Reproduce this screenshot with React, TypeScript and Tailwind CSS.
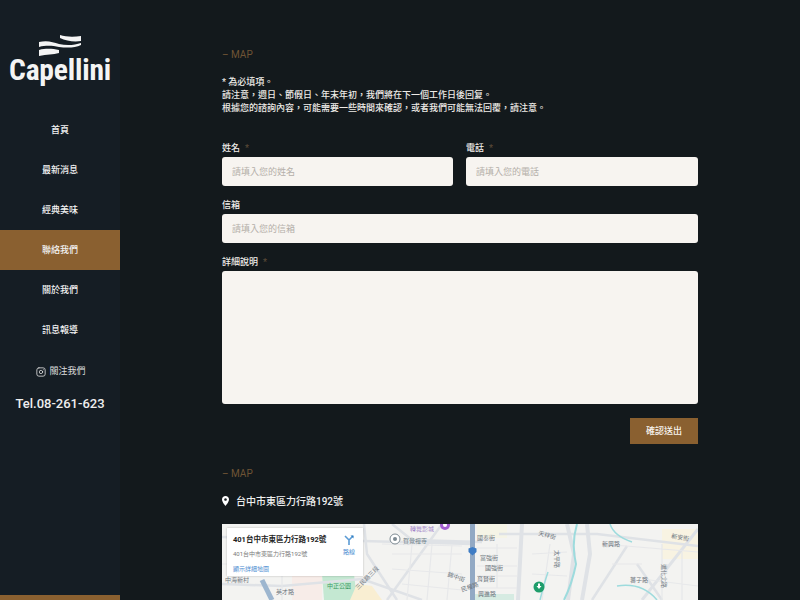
import { Instagram } from "lucide-react";

const font = { fontFamily: '"Roboto", "Noto Sans CJK TC", sans-serif' };

const nav = ["首頁", "最新消息", "經典美味", "聯絡我們", "關於我們", "訊息報導"];

function Logo() {
  return (
    <div className="flex flex-col items-center">
      <svg width="42" height="21" viewBox="0 0 42 21" className="block">
        <path d="M21 0 C27 2 35 2 42 1 L42 6 C35 7 27 6 21 3 Z" fill="#f4f4f4" />
        <path d="M0 7 C8 5 14 7 20 9 C28 11 36 10 42 8 L42 10 C36 13 28 13 20 12 C14 11 8 10 0 12 Z" fill="#f4f4f4" />
        <path d="M0 15 C8 13 14 14 20 15 L20 18 C14 20 8 19 0 21 Z" fill="#f4f4f4" />
      </svg>
      <div className="text-[29.5px] leading-[28px] font-bold text-[#f4f4f4] tracking-[-0.2px] [font-stretch:condensed]">Capellini</div>
    </div>
  );
}

function Field({ label, required, placeholder, className }: { label: string; required?: boolean; placeholder?: string; className?: string }) {
  return (
    <label className={`flex flex-col ${className ?? ""}`}>
      <span className="h-[13px] leading-[13px] text-[9px] font-medium text-[#f1eeea]">
        {label}
        {required && <span className="ml-[5px] text-[#5a4a38]">*</span>}
      </span>
      <input
        readOnly
        placeholder={placeholder}
        className="mt-[2px] h-[29px] w-full rounded-[3px] bg-[#f7f4f0] px-[10px] text-[9px] outline-none placeholder:text-[#b4afa9]"
      />
    </label>
  );
}

function MapTag() {
  return <div className="h-[14px] text-[10px] leading-[14px] text-[#6f5435]">– MAP</div>;
}

const labels: [string, number, number, number?, string?][] = [
  ["中海新村", 3, 58],
  ["英才路", 54, 70],
  ["賀覺禪寺", 181, 19, 0, "#6d7d86"],
  ["國泰街", 255, 16],
  ["富強街", 258, 36],
  ["國強街", 263, 46],
  ["育賢街", 255, 57],
  ["興進路", 256, 72],
  ["天祥街", 316, 11, 15],
  ["新興路", 380, 22],
  ["新安街", 449, 14, 10],
  ["蕃子路", 408, 58],
  ["三民路三段", 136, 66, -45],
  ["進化北路", 440, 40, 90],
  ["錦中街", 225, 52, 20],
  ["民權路", 240, 68, -20],
  ["太平路", 333, 26, 90],
];

function MapPic() {
  return (
    <svg width="476" height="76" viewBox="0 0 476 76" className="block">
      <rect width="476" height="76" fill="#f3f3f1" />
      <rect x="255" y="0" width="30" height="14" fill="#f5f4e6" />
      <rect x="440" y="5" width="36" height="30" fill="#f8f3e2" />
      <path d="M100 50 L132 50 L135 76 L102 76 Z" fill="#c4e8d2" />
      <path d="M128 76 L160 76 L150 62 L135 60 Z" fill="#f9eed2" />
      <path d="M70 52 L100 52 L100 76 L70 76 Z" fill="#f7ece8" />
      <rect x="252" y="70" width="40" height="6" fill="#d6ebe2" />
      <g fill="none" stroke="#dfe2e6" strokeWidth="2.5">
        <path d="M0 13 L250 20 M170 0 L190 16 L260 18" />
        <path d="M0 60 L60 62 L140 55 L200 76" />
        <path d="M142 0 L145 30 L175 76" />
        <path d="M220 0 L165 76" />
        <path d="M300 0 L296 76" strokeWidth="4" />
        <path d="M277 10 L375 10 L476 22" />
        <path d="M345 0 L352 30 L346 76" strokeWidth="4" />
        <path d="M365 0 L368 30 L360 76" strokeWidth="4" />
        <path d="M420 76 L476 5" strokeWidth="3" />
        <path d="M405 22 L370 76" />
        <path d="M415 40 L440 76" />
      </g>
      <g fill="none" stroke="#e7e8ea" strokeWidth="1.2">
        <path d="M0 40 L100 40 M170 30 L240 30 M170 45 L240 50 M180 60 L240 66 M160 20 L240 22" />
        <path d="M20 20 L20 58 M60 20 L60 76 M190 20 L185 76 M210 20 L205 76 M230 20 L225 76" />
        <path d="M255 24 L295 24 M255 42 L295 42 M255 52 L295 52 M255 64 L295 64 M275 20 L275 64" />
        <path d="M310 30 L345 28 M310 50 L345 52 M328 20 L320 76" />
        <path d="M380 20 L476 28 M390 40 L420 40 M440 20 L440 76 M460 28 L460 76 M420 55 L476 62" />
      </g>
      <path d="M40 56 L50 76" stroke="#9db6cf" strokeWidth="5" fill="none" />
      <rect x="248" y="0" width="5" height="76" fill="#92a9c4" />
      <path d="M250.5 23 l4 1.5 v3.5 l-4 3.5 l-4 -3.5 v-3.5 Z" fill="#3e7cc4" />
      <path d="M355 0 Q349 20 354 40 Q350 60 342 76" stroke="#9ddbdd" strokeWidth="2" fill="none" />
      <path d="M326 48 Q322 60 318 76" stroke="#9ddbdd" strokeWidth="1.5" fill="none" />
      <path d="M388 0 Q392 12 410 18" stroke="#9ddbdd" strokeWidth="1.5" fill="none" />
      <path d="M395 62 Q420 58 435 76" stroke="#9ddbdd" strokeWidth="1.5" fill="none" />
      <g fontSize="6" fill="#6f7780" style={font}>
        {labels.map(([t, x, y, r, c]) => (
          <text key={t} x={x} y={y} fill={c} transform={r ? `rotate(${r} ${x} ${y})` : undefined}>
            {t}
          </text>
        ))}
        <text x="105" y="64" fill="#3c9a66">中正公園</text>
        <text x="188" y="6.5" fill="#a385c9">轉舞影城</text>
      </g>
      <circle cx="223" cy="1" r="5" fill="#a35fd0" />
      <circle cx="223" cy="1" r="2" fill="#fff" />
      <circle cx="173" cy="15" r="5" fill="#fff" stroke="#7d8a92" />
      <circle cx="173" cy="15" r="2" fill="#7d8a92" />
      <circle cx="317" cy="63" r="5.5" fill="#1f9d6b" />
      <path d="M314.5 62 h5 l-2.5 3 Z M316 59.5 h2 v3 h-2 Z" fill="#fff" />
    </svg>
  );
}

export default function App() {
  return (
    <div className="flex h-screen overflow-hidden bg-[#13191c]" style={font}>
      <aside className="flex h-full w-[120px] shrink-0 flex-col items-stretch bg-[#151d24]">
        <div className="h-[110px] pt-[35px]">
          <Logo />
        </div>
        <nav className="flex flex-col">
          {nav.map((n) => (
            <a
              key={n}
              className={`flex h-[40px] items-center justify-center pt-[2px] text-[9px] font-medium text-[#f2f2f2] ${n === "聯絡我們" ? "bg-[#8a6030]" : ""}`}
            >
              {n}
            </a>
          ))}
        </nav>
        <div className="mt-[11px] flex h-[20px] items-center justify-center gap-[3px] pt-[2px] pl-[2px] text-[9px] text-[#dcdcdc]">
          <Instagram size={10} strokeWidth={2} />
          關注我們
        </div>
        <div className="mt-[13px] text-center text-[13px] leading-[20px] font-medium text-[#eeeeee]">Tel.08-261-623</div>
        <div className="mt-auto h-[5px] bg-[#8a6030]" />
      </aside>
      <main className="ml-[102px] w-[476px] pt-[48px]">
        <MapTag />
        <p className="mt-[14px] text-[9px] leading-[13px] font-medium text-[#eeebe7]">
          * 為必填項。
          <br />
          請注意，週日、節假日、年末年初，我們將在下一個工作日後回复。
          <br />
          根據您的諮詢內容，可能需要一些時間來確認，或者我們可能無法回覆，請注意。
        </p>
        <div className="mt-[27px] grid grid-cols-[231px_1fr] gap-x-[13px] gap-y-[13px]">
          <Field label="姓名" required placeholder="請填入您的姓名" />
          <Field label="電話" required placeholder="請填入您的電話" />
          <Field label="信箱" placeholder="請填入您的信箱" className="col-span-2" />
          <label className="col-span-2 flex flex-col">
            <span className="h-[13px] text-[9px] leading-[13px] font-medium text-[#f1eeea]">
              詳細說明<span className="ml-[5px] text-[#5a4a38]">*</span>
            </span>
            <div className="mt-[2px] h-[133px] rounded-[3px] bg-[#f7f4f0]" />
          </label>
        </div>
        <div className="mt-[14px] flex justify-end">
          <button className="h-[26px] w-[68px] bg-[#8a6030] pt-[1px] text-[9px] font-medium text-[#f8f4ee]">確認送出</button>
        </div>
        <div className="mt-[23px]">
          <MapTag />
        </div>
        <div className="mt-[13px] flex h-[14px] items-center gap-[7px] text-[10px] font-medium text-[#eeeeee]">
          <svg width="7" height="10" viewBox="0 0 7 10">
            <path fillRule="evenodd" d="M3.5 0 C5.5 0 7 1.5 7 3.5 C7 6 3.5 10 3.5 10 C3.5 10 0 6 0 3.5 C0 1.5 1.5 0 3.5 0 Z M3.5 2.2 a1.3 1.3 0 1 0 0.01 0 Z" fill="#fff" />
          </svg>
          台中市東區力行路192號
        </div>
        <div className="relative mt-[16px] h-[76px] overflow-hidden">
          <MapPic />
          <div className="absolute left-[5px] top-[4px] h-[48px] w-[136px] bg-white px-[6px] pt-[7px] shadow-[0_0_2px_rgba(0,0,0,0.25)]">
            <div className="flex justify-between">
              <div>
                <div className="text-[7.5px] leading-[9px] font-bold whitespace-nowrap text-[#222]">401台中市東區力行路192號</div>
                <div className="mt-[6px] text-[6px] leading-[8px] whitespace-nowrap text-[#7a7a7a]">401台中市東區力行路192號</div>
              </div>
              <div className="flex flex-col items-center pr-[2px]">
                <svg width="10" height="10" viewBox="0 0 10 10">
                  <path d="M1 1 L5 5 V10 M9 1 L5 5" fill="none" stroke="#5b9bd5" strokeWidth="1.6" />
                  <path d="M6.5 0.5 H9.5 V3.5 Z" fill="#2f7fc4" />
                </svg>
                <div className="mt-[3px] text-[6px] leading-[8px] text-[#4a8ad0]">路線</div>
              </div>
            </div>
            <div className="mt-[7px] text-[6px] leading-[8px] text-[#4a8ad0]">顯示詳細地圖</div>
          </div>
        </div>
      </main>
    </div>
  );
}
